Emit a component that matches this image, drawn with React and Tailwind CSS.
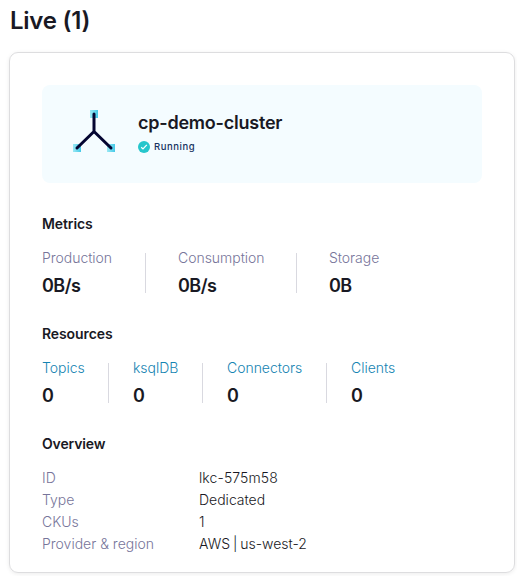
const metrics = [
  { label: 'Production', value: '0B/s', box: 'w-[103px]' },
  { label: 'Consumption', value: '0B/s', box: 'w-[151px] border-l pl-8' },
  { label: 'Storage', value: '0B', box: 'border-l pl-8' },
];

const resources = [
  { label: 'Topics', box: 'w-[66px]' },
  { label: 'ksqlDB', box: 'w-[94px] border-l pl-6' },
  { label: 'Connectors', box: 'w-[124px] border-l pl-6' },
  { label: 'Clients', box: 'border-l pl-6' },
];

const overview = [
  ['ID', 'lkc-575m58', 'tracking-[0.1px]'],
  ['Type', 'Dedicated', ''],
  ['CKUs', '1', ''],
  ['Provider & region', 'AWS | us-west-2', '[word-spacing:-1px]'],
];

function ClusterIcon() {
  return (
    <svg width="44" height="44" viewBox="0 0 44 44" className="shrink-0">
      <defs>
        <linearGradient id="node" x1="0" y1="0" x2="1" y2="0">
          <stop offset="0" stopColor="#9be9f4" />
          <stop offset="1" stopColor="#43c9e8" />
        </linearGradient>
      </defs>
      <rect x="18" y="0" width="8" height="8" fill="url(#node)" />
      <rect x="1" y="34" width="8" height="8" fill="url(#node)" />
      <rect x="35" y="34" width="8" height="8" fill="url(#node)" />
      <path d="M22 4V21.5L5 38M22 21.5L39 38" fill="none" stroke="#040531" strokeWidth="3" strokeLinecap="round" strokeLinejoin="round" />
    </svg>
  );
}

function Stat({ label, value, box, tone }) {
  return (
    <div className={`h-10 border-[#d9d9e0] ${box}`}>
      <div className={`-mt-[5px] text-sm leading-5 font-light tracking-[-0.03px] whitespace-nowrap ${tone}`}>{label}</div>
      <div className="mt-1.5 text-lg leading-6 font-semibold tracking-[-0.5px]">{value}</div>
    </div>
  );
}

export default function App() {
  return (
    <main className="h-[576px] w-[517px] overflow-hidden bg-white pt-[5px] pl-[9px] font-['Inter',sans-serif] text-[#191924]">
      <h1 className="h-8 pl-px text-2xl leading-8 font-semibold tracking-[-0.25px]">Live (1)</h1>
      <section className="mt-[15px] h-[521px] w-[506px] rounded-[9px] border border-[#dddddf] px-8 pt-8 shadow-[0_1px_4px_rgba(0,0,0,0.08)]">
        <header className="flex h-[98px] w-[440px] items-start rounded-lg bg-[#f4fcff] pt-6 pl-[30px]">
          <div className="pt-px">
            <ClusterIcon />
          </div>
          <div className="pl-[22px]">
            <h2 className="text-lg leading-7 font-semibold tracking-[-0.22px]">cp-demo-cluster</h2>
            <div className="mt-1 flex items-center gap-1">
              <svg width="12" height="12" viewBox="0 0 12 12">
                <circle cx="6" cy="6" r="6" fill="#26c6cc" />
                <path d="M3.2 6.3L5 8L8.8 3.9" fill="none" stroke="white" strokeWidth="1.2" />
              </svg>
              <span className="-mt-px text-[9.5px] leading-3 font-medium tracking-[0.55px] text-[#173361]">Running</span>
            </div>
          </div>
        </header>
        <h3 className="mt-[31px] text-sm leading-5 font-semibold tracking-[-0.1px]">Metrics</h3>
        <div className="mt-[19px] flex">
          {metrics.map((m) => (
            <Stat key={m.label} {...m} tone="text-[#77759a]" />
          ))}
        </div>
        <h3 className="mt-[31px] text-sm leading-5 font-semibold tracking-[-0.1px]">Resources</h3>
        <div className="mt-[19px] flex">
          {resources.map((r) => (
            <Stat key={r.label} {...r} value="0" tone="text-[#1584b2]" />
          ))}
        </div>
        <h3 className="mt-[31px] text-sm leading-5 font-semibold tracking-[-0.15px]">Overview</h3>
        <dl className="mt-[13px] grid grid-cols-[157px_1fr] text-sm leading-[22px] font-light">
          {overview.map(([k, v, spacing]) => (
            <div key={k} className="contents">
              <dt className="text-[#77759a]">{k}</dt>
              <dd className={spacing}>{v}</dd>
            </div>
          ))}
        </dl>
      </section>
    </main>
  );
}
